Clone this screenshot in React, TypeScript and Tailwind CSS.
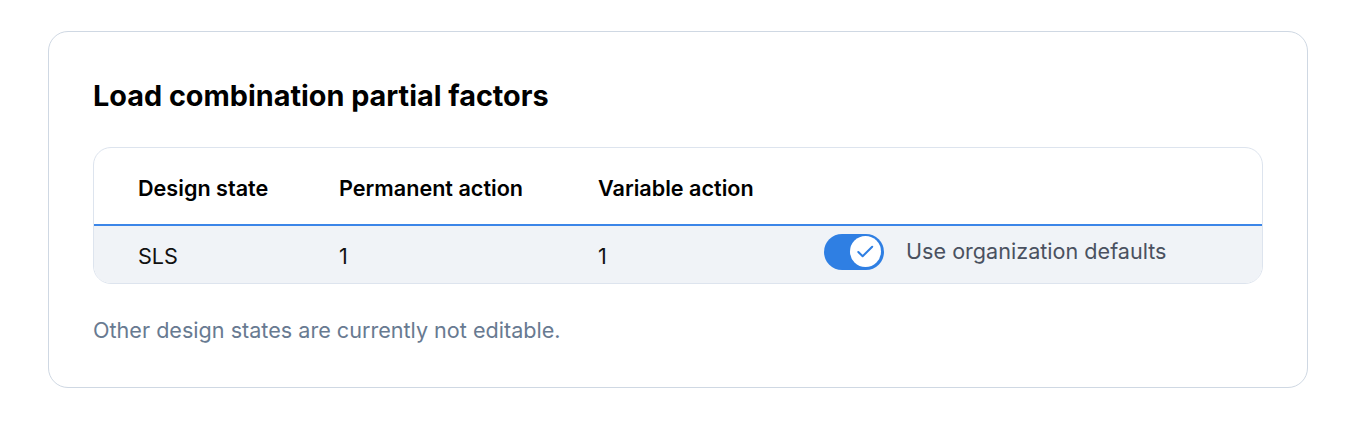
import React, { useState } from 'react';

const rows = [{ state: 'SLS', permanent: '1', variable: '1' }];

const Toggle: React.FC<{ on: boolean; onChange: () => void }> = ({ on, onChange }) => (
    <button
        type="button"
        onClick={onChange}
        className={`relative flex items-center w-[60px] h-[36px] rounded-full px-[3px] ${on ? 'bg-[#2f7fe3] justify-end' : 'bg-[#cbd5e1] justify-start'}`}
    >
        <span className="flex items-center justify-center w-[31px] h-[31px] rounded-full bg-white">
            {on && (
                <svg viewBox="0 0 24 24" className="w-[23px] h-[23px]" fill="none" stroke="#2f7fe3" strokeWidth="2.1" strokeLinecap="round" strokeLinejoin="round">
                    <path d="M4.5 12.5l4.5 4.5 10-10" />
                </svg>
            )}
        </span>
    </button>
);

export default function App() {
    const [useDefaults, setUseDefaults] = useState(true);

    return (
        <div className="min-h-screen bg-white pt-[31px] pl-[48px]" style={{ fontFamily: 'Inter, "Noto Sans", sans-serif' }}>
            <div className="w-[1260px] h-[357px] rounded-[20px] border border-[#cfd8e3] px-[44px] pt-[44px]">
                <h2 className="text-[28.8px] leading-[40px] font-bold text-black">
                    Load combination partial factors
                </h2>

                {/* Table */}
                <div className="mt-[31px] rounded-[18px] border border-[#dde4ee] overflow-hidden">
                    <div className="flex items-center h-[78px] border-b-2 border-[#3b86e8] pl-[44px] pt-[4px] text-[21.6px] font-semibold text-black">
                        <div className="w-[201px]">Design state</div>
                        <div className="w-[259px]">Permanent action</div>
                        <div className="w-[226px]">Variable action</div>
                    </div>
                    {rows.map(row => (
                        <div key={row.state} className="flex items-center h-[57px] bg-[#f0f3f7] pl-[44px] text-[21.6px] text-[#111]">
                            <div className="w-[201px] pt-[3px]">{row.state}</div>
                            <div className="w-[259px] pt-[3px]">{row.permanent}</div>
                            <div className="w-[226px] pt-[3px]">{row.variable}</div>
                            <div className="flex items-center gap-[22px] pb-[6px]">
                                <Toggle on={useDefaults} onChange={() => setUseDefaults(!useDefaults)} />
                                <span className="text-[#4a5160]">Use organization defaults</span>
                            </div>
                        </div>
                    ))}
                </div>

                <p className="mt-[30px] text-[21.6px] text-[#687a91]">Other design states are currently not editable.</p>
            </div>
        </div>
    );
}
